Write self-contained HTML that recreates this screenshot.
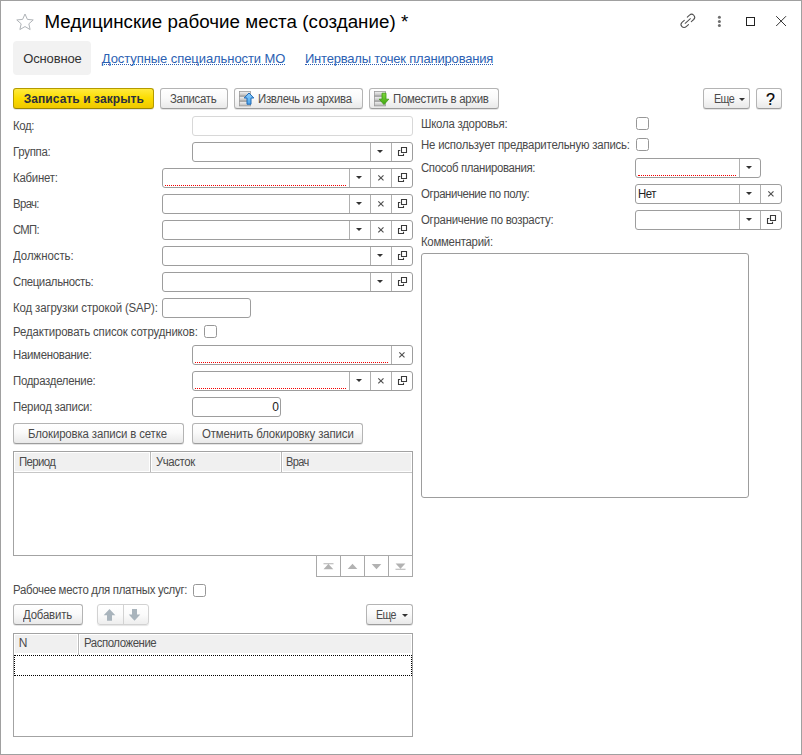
<!DOCTYPE html>
<html lang="ru"><head><meta charset="utf-8"><title>Медицинские рабочие места (создание) *</title>
<style>
*{box-sizing:border-box;margin:0;padding:0}
html,body{width:802px;height:755px;overflow:hidden;background:#fff}
body{font-family:"Liberation Sans",sans-serif;font-size:12px;color:#333;position:relative}
#win{position:absolute;left:0;top:0;width:802px;height:755px;background:#fff;border:1px solid #a0a0a0}
.a{position:absolute}
.t{position:absolute;white-space:nowrap;height:20px;line-height:20px;z-index:5;transform-origin:0 0}
.t.lnk:after{content:"";position:absolute;left:0;right:0;top:15px;border-bottom:1px dotted #2b5fb3}
.inp{position:absolute;height:20px;border:1px solid #9d9d9d;border-radius:3px;background:#fff;display:flex;justify-content:flex-end}
.inp.dis{border-color:#d8d8d8}
.inp .c{width:21px;height:18px;border-left:1px solid #b0b0b0;position:relative;flex:none}
.inp .r{position:absolute;left:2px;top:16px;height:0;border-bottom:1px dotted #f40000}
.c.ar:after{content:"";position:absolute;left:6px;top:7px;border:3px solid transparent;border-top:3px solid #333;border-bottom:0}
.c svg{position:absolute;left:0;top:0}
.btn{position:absolute;height:21px;border:1px solid #b4b4b4;border-bottom-color:#9c9c9c;border-radius:3px;background:linear-gradient(#ffffff 0%,#fafafa 45%,#e9e9e9 100%);box-shadow:0 1px 0 rgba(0,0,0,.10)}
.chk{position:absolute;width:13px;height:13px;border:1px solid #979797;border-radius:2.5px;background:#fff}
.tbl{position:absolute;border:1px solid #a3a3a3;background:#fff}
.th{position:absolute;top:0;height:20px;background:#f0f0f0;border:1px solid #fff}
.tri{position:absolute;width:0;height:0}
</style></head><body>
<div id="win"></div>
<!-- title bar -->
<svg class="a" style="left:15.200px;top:11.800px" width="20" height="20" viewBox="0 0 18 18"><path d="M9 1.8l2.15 4.85 5.25.5-3.95 3.5 1.15 5.15L9 13.1l-4.6 2.7 1.15-5.15L1.6 7.15l5.25-.5z" fill="none" stroke="#b0b4b8" stroke-width=".9" stroke-linejoin="miter"/></svg>
<svg class="a" style="left:678px;top:11px" width="20" height="20" viewBox="0 0 20 20" fill="none" stroke="#505050" stroke-width="1.05" stroke-linecap="round"><path d="M7.2 12.3l5.2-4.6"/><path d="M9.3 6.2l2.2-2a3 3 0 0 1 4.2 4.3l-2.4 2.2"/><path d="M10.5 13.6l-2.3 2.1a3 3 0 0 1-4.2-4.3l2.3-2.1"/></svg>
<svg class="a" style="left:716px;top:14px" width="7" height="15" viewBox="0 0 7 15" fill="#6e6e6e"><circle cx="3.4" cy="3.3" r="1.5"/><circle cx="3.4" cy="7.5" r="1.5"/><circle cx="3.4" cy="11.6" r="1.5"/></svg>
<div class="a" style="left:746px;top:17px;width:9px;height:9px;border:1px solid #222"></div>
<svg class="a" style="left:775px;top:15px" width="12" height="12" viewBox="0 0 12 12" stroke="#333" stroke-width="1" fill="none"><path d="M1.2 1.2l9.8 9.8M11 1.2L1.2 11"/></svg>
<!-- tabs -->
<div class="a" style="left:13px;top:41px;width:78px;height:34px;background:#f2f2f2;border-radius:4px"></div>
<!-- command bar -->
<div class="btn" style="left:13px;top:88px;width:141px;background:linear-gradient(#ffea3d 0%,#fbdc00 50%,#efc800 100%);border-color:#b39a00;border-bottom-color:#9c8600"></div>
<div class="btn" style="left:160px;top:88px;width:68px"></div>
<div class="btn" style="left:234px;top:88px;width:129px"></div>
<div class="btn" style="left:369px;top:88px;width:130px"></div>
<div class="btn" style="left:703px;top:88px;width:47px"></div>
<div class="btn" style="left:756px;top:88px;width:26px"></div>
<div class="tri" style="left:739px;top:98px;border:3px solid transparent;border-top:3px solid #333;border-bottom:0"></div>
<!-- archive icons -->
<svg class="a" style="left:239px;top:90px" width="16" height="17" viewBox="0 0 16 17"><defs><linearGradient id="g1" x1="0" x2="0" y1="0" y2="1"><stop offset="0" stop-color="#f4f4f4"/><stop offset="1" stop-color="#b8b8b8"/></linearGradient><linearGradient id="g2" x1="0" x2="0" y1="0" y2="1"><stop offset="0" stop-color="#8fd0ff"/><stop offset="1" stop-color="#4aa3ea"/></linearGradient></defs>
<rect x=".5" y="1.5" width="11" height="4.4" fill="url(#g1)" stroke="#9a9a9a" stroke-width=".8"/><rect x=".5" y="6.5" width="11" height="4.4" fill="url(#g1)" stroke="#9a9a9a" stroke-width=".8"/><rect x=".5" y="11.5" width="11" height="4.4" fill="url(#g1)" stroke="#9a9a9a" stroke-width=".8"/>
<path d="M10 3l4.8 5H12v6.2H8V8H5.2z" fill="url(#g2)" stroke="#1f68b4" stroke-width="1" stroke-linejoin="round"/></svg>
<svg class="a" style="left:374px;top:90px" width="16" height="17" viewBox="0 0 16 17"><defs><linearGradient id="g3" x1="0" x2="0" y1="0" y2="1"><stop offset="0" stop-color="#7fd83c"/><stop offset="1" stop-color="#3fa511"/></linearGradient></defs>
<rect x=".5" y="1.5" width="11" height="4.4" fill="url(#g1)" stroke="#9a9a9a" stroke-width=".8"/><rect x=".5" y="6.5" width="11" height="4.4" fill="url(#g1)" stroke="#9a9a9a" stroke-width=".8"/><rect x=".5" y="11.5" width="11" height="4.4" fill="url(#g1)" stroke="#9a9a9a" stroke-width=".8"/>
<path d="M8 3.2h4v6h2.8L10 14.6 5.2 9.2H8z" fill="url(#g3)" stroke="#3c9a12" stroke-width=".8" stroke-linejoin="round"/></svg>
<div class="inp dis" style="left:192px;top:116px;width:221px"></div>
<div class="inp" style="left:192px;top:142px;width:221px"><div class="c ar"></div><div class="c"><svg width="20" height="18" viewBox="0 0 20 18" stroke="#3a3a3a" stroke-width="1.1" fill="none"><path d="M9.5 4.5h5v5h-5z"/><path d="M8.300 7.500h-1.800v5h5v-1.800"/></svg></div></div>
<div class="inp" style="left:162px;top:168px;width:251px"><div class="r" style="width:181px"></div><div class="c ar"></div><div class="c"><svg width="20" height="18" viewBox="0 0 20 18" stroke="#505050" stroke-width="1.15" fill="none"><path d="M7.300 6.400l5.200 5M12.500 6.400l-5.200 5"/></svg></div><div class="c"><svg width="20" height="18" viewBox="0 0 20 18" stroke="#3a3a3a" stroke-width="1.1" fill="none"><path d="M9.5 4.5h5v5h-5z"/><path d="M8.300 7.500h-1.800v5h5v-1.800"/></svg></div></div>
<div class="inp" style="left:162px;top:194px;width:251px"><div class="c ar"></div><div class="c"><svg width="20" height="18" viewBox="0 0 20 18" stroke="#505050" stroke-width="1.15" fill="none"><path d="M7.300 6.400l5.200 5M12.500 6.400l-5.200 5"/></svg></div><div class="c"><svg width="20" height="18" viewBox="0 0 20 18" stroke="#3a3a3a" stroke-width="1.1" fill="none"><path d="M9.5 4.5h5v5h-5z"/><path d="M8.300 7.500h-1.800v5h5v-1.800"/></svg></div></div>
<div class="inp" style="left:162px;top:220px;width:251px"><div class="c ar"></div><div class="c"><svg width="20" height="18" viewBox="0 0 20 18" stroke="#505050" stroke-width="1.15" fill="none"><path d="M7.300 6.400l5.200 5M12.500 6.400l-5.200 5"/></svg></div><div class="c"><svg width="20" height="18" viewBox="0 0 20 18" stroke="#3a3a3a" stroke-width="1.1" fill="none"><path d="M9.5 4.5h5v5h-5z"/><path d="M8.300 7.500h-1.800v5h5v-1.800"/></svg></div></div>
<div class="inp" style="left:162px;top:246px;width:251px"><div class="c ar"></div><div class="c"><svg width="20" height="18" viewBox="0 0 20 18" stroke="#3a3a3a" stroke-width="1.1" fill="none"><path d="M9.5 4.5h5v5h-5z"/><path d="M8.300 7.500h-1.800v5h5v-1.800"/></svg></div></div>
<div class="inp" style="left:162px;top:272px;width:251px"><div class="c ar"></div><div class="c"><svg width="20" height="18" viewBox="0 0 20 18" stroke="#3a3a3a" stroke-width="1.1" fill="none"><path d="M9.5 4.5h5v5h-5z"/><path d="M8.300 7.500h-1.800v5h5v-1.800"/></svg></div></div>
<div class="inp" style="left:162px;top:298px;width:89px"></div>
<div class="inp" style="left:192px;top:345px;width:221px"><div class="r" style="width:193px"></div><div class="c"><svg width="20" height="18" viewBox="0 0 20 18" stroke="#505050" stroke-width="1.15" fill="none"><path d="M7.300 6.400l5.200 5M12.500 6.400l-5.200 5"/></svg></div></div>
<div class="inp" style="left:192px;top:371px;width:221px"><div class="r" style="width:151px"></div><div class="c ar"></div><div class="c"><svg width="20" height="18" viewBox="0 0 20 18" stroke="#505050" stroke-width="1.15" fill="none"><path d="M7.300 6.400l5.200 5M12.500 6.400l-5.200 5"/></svg></div><div class="c"><svg width="20" height="18" viewBox="0 0 20 18" stroke="#3a3a3a" stroke-width="1.1" fill="none"><path d="M9.5 4.5h5v5h-5z"/><path d="M8.300 7.500h-1.800v5h5v-1.800"/></svg></div></div>
<div class="inp" style="left:192px;top:397px;width:89px"></div>
<div class="inp" style="left:635px;top:158px;width:126px"><div class="r" style="width:98px"></div><div class="c ar"></div></div>
<div class="inp" style="left:635px;top:184px;width:147px"><div class="c ar"></div><div class="c"><svg width="20" height="18" viewBox="0 0 20 18" stroke="#505050" stroke-width="1.15" fill="none"><path d="M7.300 6.400l5.200 5M12.500 6.400l-5.200 5"/></svg></div></div>
<div class="inp" style="left:635px;top:210px;width:147px"><div class="c ar"></div><div class="c"><svg width="20" height="18" viewBox="0 0 20 18" stroke="#3a3a3a" stroke-width="1.1" fill="none"><path d="M9.5 4.5h5v5h-5z"/><path d="M8.300 7.500h-1.800v5h5v-1.800"/></svg></div></div>
<div class="chk" style="left:204px;top:325px"></div>
<div class="chk" style="left:636px;top:117px"></div>
<div class="chk" style="left:636px;top:138px"></div>
<div class="chk" style="left:193px;top:584px"></div>
<div class="a" style="left:421px;top:253px;width:328px;height:245px;border:1px solid #9d9d9d;border-radius:3px;background:#fff"></div>
<div class="btn" style="left:13px;top:423px;width:171px;"></div>
<div class="btn" style="left:192px;top:423px;width:171px;"></div>
<div class="btn" style="left:13px;top:604px;width:70px;"></div>
<div class="btn" style="left:366px;top:604px;width:47px;"></div>
<div class="tri" style="left:402px;top:614px;border:3px solid transparent;border-top:3px solid #333;border-bottom:0"></div>
<div class="tbl" style="left:13px;top:451px;width:400px;height:105px"><div class="th" style="left:0px;width:136px"></div><div class="a" style="left:136px;top:0;width:1px;height:20px;background:#b9b9b9"></div><div class="th" style="left:137px;width:130px"></div><div class="a" style="left:267px;top:0;width:1px;height:20px;background:#b9b9b9"></div><div class="th" style="left:268px;width:130px"></div><div class="a" style="left:0;top:20px;width:398px;height:1px;background:#c6c6c6"></div></div>
<div class="a" style="left:316px;top:555px;width:97px;height:22px;border:1px solid #a9a9a9;background:#fff"><div class="a" style="left:23px;top:0;width:1px;height:20px;background:#a9a9a9"></div><div class="a" style="left:47px;top:0;width:1px;height:20px;background:#a9a9a9"></div><div class="a" style="left:71px;top:0;width:1px;height:20px;background:#a9a9a9"></div><svg class="a" style="left:0;top:0" width="95" height="20" viewBox="0 0 95 20" fill="#b2b2b2"><path d="M6.500 7.200h10v1h-10zM6.500 13.300l4.900-5.300 4.900 5.300z"/><path d="M30.700 13.100l4.800-5.300 4.800 5.300z"/><path d="M54.700 8l4.800 5.300 4.800-5.300z"/><path d="M78.600 7.400l4.900 5.300 4.900-5.300zM78.500 12.700h10v1h-10z"/></svg></div>
<div class="a" style="left:97px;top:604px;width:52px;height:21px;border:1px solid #d2d2d2;border-radius:3px;background:linear-gradient(#fff 0%,#fbfbfb 50%,#eee 100%);box-shadow:0 1px 1px rgba(0,0,0,.10)"><div class="a" style="left:25px;top:0;width:1px;height:19px;background:#d2d2d2"></div><svg class="a" style="left:0;top:0" width="50" height="19" viewBox="0 0 50 19" fill="#a9b4bc"><path d="M11.500 4l5.800 6.200h-3.300v5.500h-5v-5.500h-3.300z"/><path d="M34 4h5v5.500h3.300L36.500 15.700 30.700 9.500H34z"/></svg></div>
<div class="tbl" style="left:13px;top:633px;width:400px;height:104px"><div class="th" style="left:0px;width:64px"></div><div class="a" style="left:64px;top:0;width:1px;height:21px;background:#b9b9b9"></div><div class="th" style="left:65px;width:333px"></div><div class="a" style="left:0;top:21px;width:398px;height:21px;border:1px dotted #000"></div></div>
<div class="t" style="left:44.5px;top:12px;font-size:18.75px;color:#000;letter-spacing:0.04px">Медицинские рабочие места (создание) *</div>
<div class="t" style="left:23.2px;top:49px;font-size:13px;color:#333;letter-spacing:-0.13px">Основное</div>
<div class="t lnk" style="left:101.8px;top:49px;font-size:13px;color:#2b5fb3;letter-spacing:-0.07px">Доступные специальности МО</div>
<div class="t lnk" style="left:304.9px;top:49px;font-size:13px;color:#2b5fb3;letter-spacing:-0.19px">Интервалы точек планирования</div>
<div class="t" style="left:23.7px;top:89px;font-size:12px;color:#2c2f3f;letter-spacing:0.07px;font-weight:bold">Записать и закрыть</div>
<div class="t" style="left:170.4px;top:89px;font-size:12px;color:#4a4a4a;letter-spacing:-0.31px;transform:scaleX(0.95)">Записать</div>
<div class="t" style="left:257.7px;top:89px;font-size:12px;color:#4a4a4a;letter-spacing:-0.3px;transform:scaleX(0.95)">Извлечь из архива</div>
<div class="t" style="left:392.9px;top:89px;font-size:12px;color:#4a4a4a;letter-spacing:-0.29px;transform:scaleX(0.95)">Поместить в архив</div>
<div class="t" style="left:713.5px;top:89px;font-size:12px;color:#4a4a4a;letter-spacing:-0.7px;transform:scaleX(0.895)">Еще</div>
<div class="t" style="left:766.1px;top:90px;font-size:16px;color:#000;letter-spacing:0px;-webkit-text-stroke:.2px #000">?</div>
<div class="t" style="left:13.2px;top:116px;font-size:12px;color:#4a4a4a;letter-spacing:-0.4px;transform:scaleX(0.95)">Код:</div>
<div class="t" style="left:13.2px;top:142px;font-size:12px;color:#4a4a4a;letter-spacing:-0.28px;transform:scaleX(0.95)">Группа:</div>
<div class="t" style="left:13.2px;top:168px;font-size:12px;color:#4a4a4a;letter-spacing:-0.23px;transform:scaleX(0.95)">Кабинет:</div>
<div class="t" style="left:13.2px;top:194px;font-size:12px;color:#4a4a4a;letter-spacing:-0.69px;transform:scaleX(0.95)">Врач:</div>
<div class="t" style="left:13.2px;top:220px;font-size:12px;color:#4a4a4a;letter-spacing:-0.7px;transform:scaleX(0.934)">СМП:</div>
<div class="t" style="left:13.2px;top:246px;font-size:12px;color:#4a4a4a;letter-spacing:-0.02px;transform:scaleX(0.95)">Должность:</div>
<div class="t" style="left:13.2px;top:272px;font-size:12px;color:#4a4a4a;letter-spacing:-0.37px;transform:scaleX(0.95)">Специальность:</div>
<div class="t" style="left:13.2px;top:298px;font-size:12px;color:#4a4a4a;letter-spacing:-0.13px;transform:scaleX(0.95)">Код загрузки строкой (SAP):</div>
<div class="t" style="left:13.2px;top:322px;font-size:12px;color:#4a4a4a;letter-spacing:-0.14px;transform:scaleX(0.95)">Редактировать список сотрудников:</div>
<div class="t" style="left:13.2px;top:345px;font-size:12px;color:#4a4a4a;letter-spacing:-0.29px;transform:scaleX(0.95)">Наименование:</div>
<div class="t" style="left:13.2px;top:371px;font-size:12px;color:#4a4a4a;letter-spacing:-0.29px;transform:scaleX(0.95)">Подразделение:</div>
<div class="t" style="left:13.2px;top:397px;font-size:12px;color:#4a4a4a;letter-spacing:-0.25px;transform:scaleX(0.95)">Период записи:</div>
<div class="t" style="left:13.2px;top:580px;font-size:12px;color:#4a4a4a;letter-spacing:-0.31px;transform:scaleX(0.95)">Рабочее место для платных услуг:</div>
<div class="t" style="left:421.3px;top:114px;font-size:12px;color:#4a4a4a;letter-spacing:-0.24px;transform:scaleX(0.95)">Школа здоровья:</div>
<div class="t" style="left:421.3px;top:135px;font-size:12px;color:#4a4a4a;letter-spacing:-0.21px;transform:scaleX(0.95)">Не использует предварительную запись:</div>
<div class="t" style="left:421.3px;top:158px;font-size:12px;color:#4a4a4a;letter-spacing:-0.39px;transform:scaleX(0.95)">Способ планирования:</div>
<div class="t" style="left:421.3px;top:184px;font-size:12px;color:#4a4a4a;letter-spacing:-0.42px;transform:scaleX(0.95)">Ограничение по полу:</div>
<div class="t" style="left:421.3px;top:210px;font-size:12px;color:#4a4a4a;letter-spacing:-0.27px;transform:scaleX(0.95)">Ограничение по возрасту:</div>
<div class="t" style="left:421.3px;top:232px;font-size:12px;color:#4a4a4a;letter-spacing:-0.28px;transform:scaleX(0.95)">Комментарий:</div>
<div class="t" style="left:28.2px;top:424px;font-size:12px;color:#4a4a4a;letter-spacing:-0.14px;transform:scaleX(0.95)">Блокировка записи в сетке</div>
<div class="t" style="left:201.5px;top:424px;font-size:12px;color:#4a4a4a;letter-spacing:-0.12px;transform:scaleX(0.95)">Отменить блокировку записи</div>
<div class="t" style="left:22.8px;top:605px;font-size:12px;color:#4a4a4a;letter-spacing:-0.19px;transform:scaleX(0.95)">Добавить</div>
<div class="t" style="left:376.3px;top:605px;font-size:12px;color:#4a4a4a;letter-spacing:-0.7px;transform:scaleX(0.887)">Еще</div>
<div class="t" style="left:18.7px;top:452px;font-size:12px;color:#4a4a4a;letter-spacing:-0.65px;transform:scaleX(0.95)">Период</div>
<div class="t" style="left:155.9px;top:452px;font-size:12px;color:#4a4a4a;letter-spacing:-0.43px;transform:scaleX(0.95)">Участок</div>
<div class="t" style="left:286.3px;top:452px;font-size:12px;color:#4a4a4a;letter-spacing:-0.7px;transform:scaleX(0.92)">Врач</div>
<div class="t" style="left:18.7px;top:633px;font-size:12px;color:#4a4a4a;letter-spacing:0px">N</div>
<div class="t" style="left:83.7px;top:633px;font-size:12px;color:#4a4a4a;letter-spacing:-0.46px;transform:scaleX(0.95)">Расположение</div>
<div class="t" style="left:638.2px;top:184px;font-size:12px;color:#222;letter-spacing:-0.47px;transform:scaleX(0.95)">Нет</div>
<div class="t" style="left:272.3px;top:397px;font-size:12px;color:#222;letter-spacing:0px">0</div>
</body></html>
